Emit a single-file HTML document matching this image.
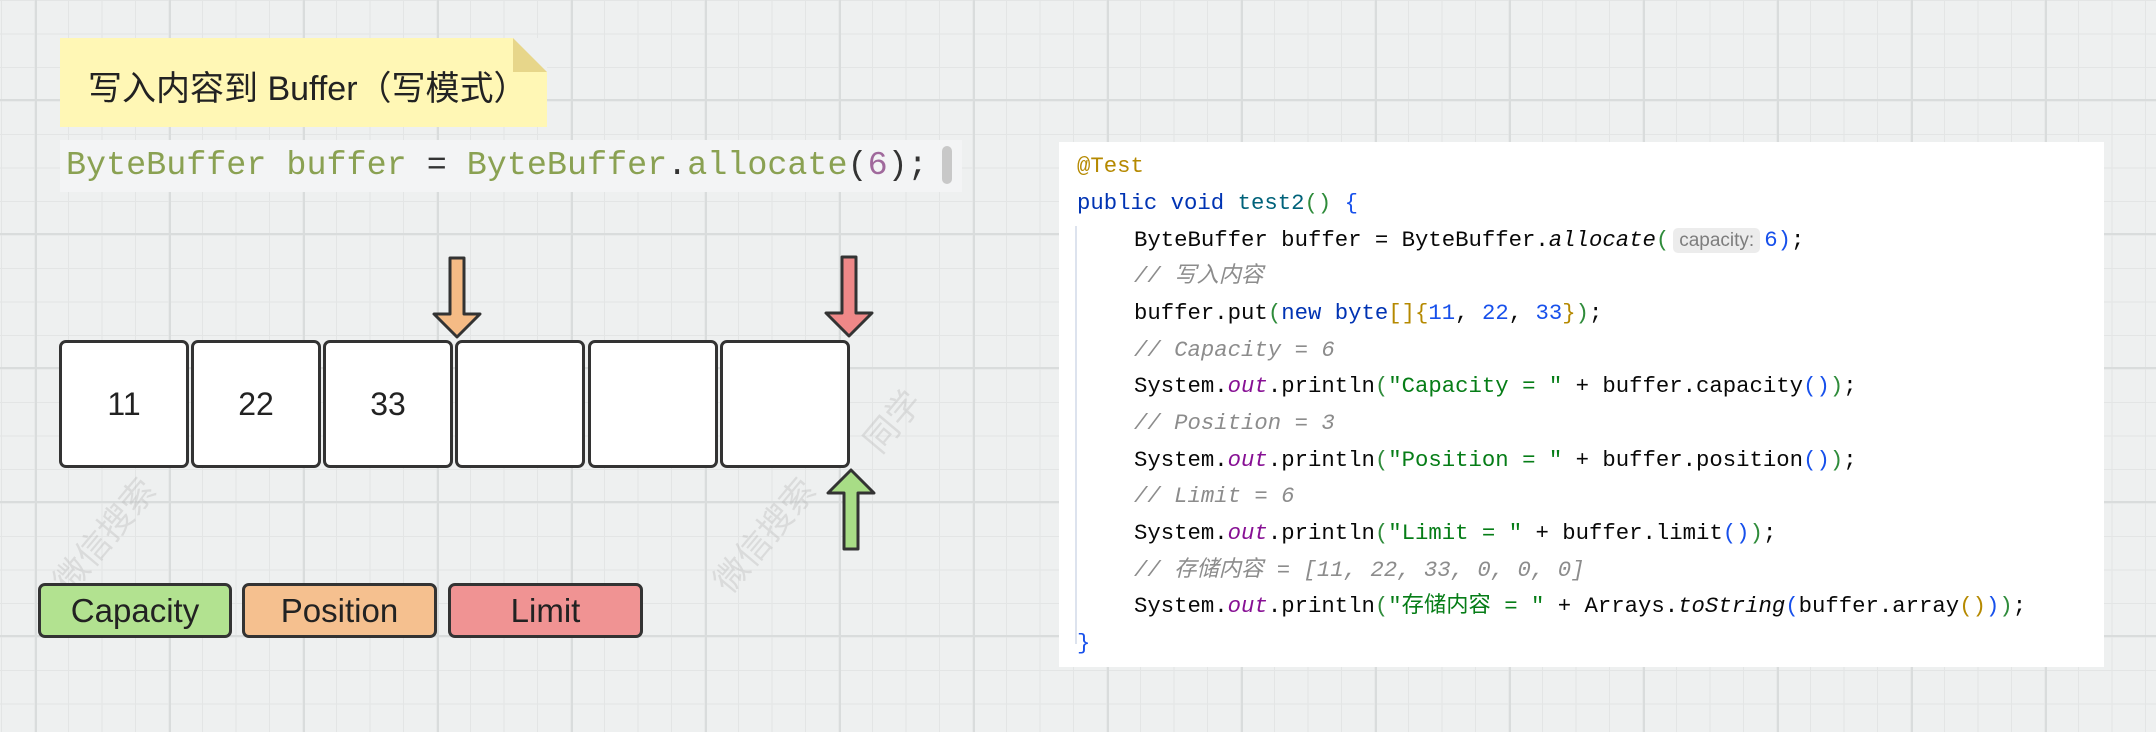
<!DOCTYPE html>
<html><head><meta charset="utf-8"><style>
html,body{margin:0;padding:0}
body{width:2156px;height:732px;position:relative;overflow:hidden;background-color:#eef0f0;
background-image:linear-gradient(#d9dcdc 2px,transparent 2px),linear-gradient(90deg,#d9dcdc 2px,transparent 2px),linear-gradient(#e3e5e5 1px,transparent 1px),linear-gradient(90deg,#e3e5e5 1px,transparent 1px);
background-size:134px 134px,134px 134px,33.5px 33.5px,33.5px 33.5px;background-position:35px 99px,35px 99px,1px 0,1px 0;font-family:"Liberation Sans","Noto Sans CJK SC",sans-serif}
.abs{position:absolute}
.note{left:60px;top:38px;width:487px;height:89px;background:#fff7b5}
.fold{left:513px;top:38px;width:0;height:0;border-left:34px solid #e7d68a;border-top:34px solid #eef0f0}
.title{left:88px;top:61px;font-size:34px;color:#222}
.cl{left:60px;top:140px;width:902px;height:52px;background:#f3f4f5;font-family:"Liberation Mono",monospace;font-size:33.4px;line-height:52px;color:#8aa152;white-space:pre}
.cl .sc{position:absolute;right:10px;top:6px;width:10px;height:38px;background:#c8c8c8;border-radius:5px}
.cell{top:340px;width:130px;height:128px;background:#fff;border:3px solid #333;border-radius:7px;box-sizing:border-box;font-size:32px;color:#222;display:flex;align-items:center;justify-content:center}
.lg{top:583px;height:55px;border:3px solid #333;border-radius:7px;box-sizing:border-box;font-size:33px;color:#222;display:flex;align-items:center;justify-content:center}
.code{left:1059px;top:142px;width:1045px;height:525px;background:#fff;font-family:"Liberation Mono","Noto Sans CJK SC",monospace;font-size:22.3px;color:#080808}
.ln{position:absolute;white-space:pre;line-height:36px;height:36px}
.k{color:#0033b3}.c{color:#8c8c8c;font-style:italic}.s{color:#067d17}.o{color:#871094;font-style:italic}.n{color:#1750eb}.i{font-style:italic}.g{color:#2e8b3a}.b{color:#1750eb}.y{color:#b58900}
.hint{background:#ececec;color:#7d7d7d;font-family:"Liberation Sans",sans-serif;font-size:19px;border-radius:5px;padding:2px 6px;margin:0 4px}
.wm{color:rgba(180,180,180,.35);font-size:34px;transform:rotate(-50deg);transform-origin:left top}
</style></head><body>
<div class="abs note"></div><div class="abs fold"></div>
<div class="abs title">写入内容到 Buffer（写模式）</div>
<div class="abs cl"><span style="margin-left:6px"></span>ByteBuffer buffer <span style="color:#333">=</span> ByteBuffer<span style="color:#333">.</span>allocate<span style="color:#333">(</span><span style="color:#a0699c">6</span><span style="color:#333">);</span><div class="sc"></div></div>

<div class="abs wm" style="left:40px;top:570px">微信搜索</div>
<div class="abs wm" style="left:700px;top:570px">微信搜索</div>
<div class="abs wm" style="left:850px;top:430px">同学</div>

<div class="abs cell" style="left:59px">11</div>
<div class="abs cell" style="left:191px">22</div>
<div class="abs cell" style="left:323px">33</div>
<div class="abs cell" style="left:455px"></div>
<div class="abs cell" style="left:588px"></div>
<div class="abs cell" style="left:720px"></div>

<svg class="abs" style="left:0;top:0" width="1000" height="732">
<path d="M450 258 H464 V314 H480 L457 337 L434 314 H450 Z" fill="#f5bb85" stroke="#333" stroke-width="3" stroke-linejoin="round"/>
<path d="M842 257 H856 V313 H872 L849 336 L826 313 H842 Z" fill="#ef8888" stroke="#333" stroke-width="3" stroke-linejoin="round"/>
<path d="M844 549 H858 V493 H874 L851 470 L828 493 H844 Z" fill="#a8dd86" stroke="#333" stroke-width="3" stroke-linejoin="round"/>
</svg>

<div class="abs lg" style="left:38px;width:194px;background:#b2e290">Capacity</div>
<div class="abs lg" style="left:242px;width:195px;background:#f5c08f">Position</div>
<div class="abs lg" style="left:448px;width:195px;background:#f09393">Limit</div>

<div class="abs code">
<div class="abs" style="left:16px;top:84px;width:2px;height:418px;background:#dde3ee"></div>
<div class="ln y" style="left:18px;top:6px">@Test</div>
<div class="ln" style="left:18px;top:43px"><span class="k">public void</span> <span style="color:#00627a">test2</span><span class="g">()</span> <span class="b">{</span></div>
<div class="ln" style="left:75px;top:80px">ByteBuffer buffer = ByteBuffer.<span class="i">allocate</span><span class="g">(</span><span class="hint">capacity:</span><span class="n">6</span><span class="b">)</span>;</div>
<div class="ln c" style="left:75px;top:116px">// 写入内容</div>
<div class="ln" style="left:75px;top:153px">buffer.put<span class="g">(</span><span class="k">new byte</span><span class="y">[]</span><span class="y">{</span><span class="n">11</span>, <span class="n">22</span>, <span class="n">33</span><span class="y">}</span><span class="g">)</span>;</div>
<div class="ln c" style="left:75px;top:190px">// Capacity = 6</div>
<div class="ln" style="left:75px;top:226px">System.<span class="o">out</span>.println<span class="g">(</span><span class="s">"Capacity = "</span> + buffer.capacity<span class="b">()</span><span class="g">)</span>;</div>
<div class="ln c" style="left:75px;top:263px">// Position = 3</div>
<div class="ln" style="left:75px;top:300px">System.<span class="o">out</span>.println<span class="g">(</span><span class="s">"Position = "</span> + buffer.position<span class="b">()</span><span class="g">)</span>;</div>
<div class="ln c" style="left:75px;top:336px">// Limit = 6</div>
<div class="ln" style="left:75px;top:373px">System.<span class="o">out</span>.println<span class="g">(</span><span class="s">"Limit = "</span> + buffer.limit<span class="b">()</span><span class="g">)</span>;</div>
<div class="ln c" style="left:75px;top:410px">// 存储内容 = [11, 22, 33, 0, 0, 0]</div>
<div class="ln" style="left:75px;top:446px">System.<span class="o">out</span>.println<span class="g">(</span><span class="s">"存储内容 = "</span> + Arrays.<span class="i">toString</span><span class="b">(</span>buffer.array<span class="y">()</span><span class="b">)</span><span class="g">)</span>;</div>
<div class="ln b" style="left:18px;top:483px">}</div>
</div>
</body></html>
